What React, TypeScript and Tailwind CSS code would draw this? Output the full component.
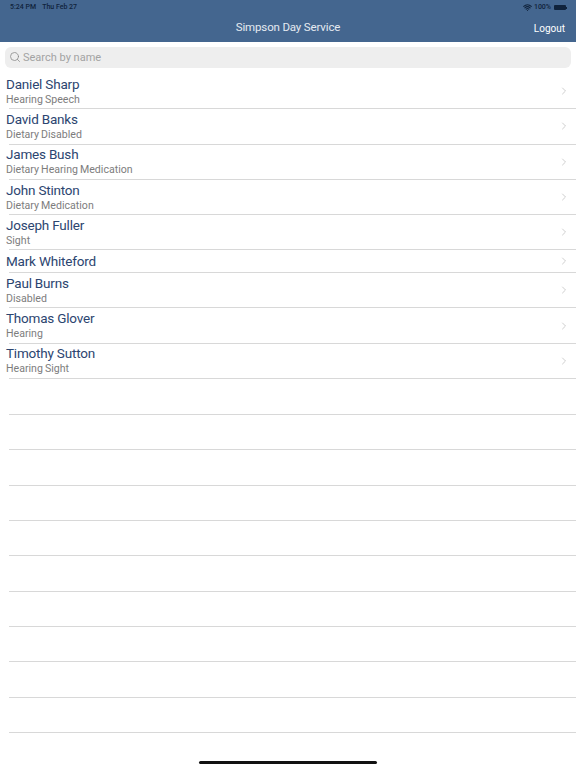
import React from 'react';
import { ChevronRight, Search, Wifi } from 'lucide-react';

interface Client {
  name: string;
  tags: string[];
}

const clients: Client[] = [
  { name: 'Daniel Sharp', tags: ['Hearing', 'Speech'] },
  { name: 'David Banks', tags: ['Dietary', 'Disabled'] },
  { name: 'James Bush', tags: ['Dietary', 'Hearing', 'Medication'] },
  { name: 'John Stinton', tags: ['Dietary', 'Medication'] },
  { name: 'Joseph Fuller', tags: ['Sight'] },
  { name: 'Mark Whiteford', tags: [] },
  { name: 'Paul Burns', tags: ['Disabled'] },
  { name: 'Thomas Glover', tags: ['Hearing'] },
  { name: 'Timothy Sutton', tags: ['Hearing', 'Sight'] },
];

const emptyRows = Array.from({ length: 10 }, (_, i) => i);

const ClientRow = ({ client }: { client: Client }) => {
  const hasTags = client.tags.length > 0;
  return (
    <div className={`relative flex items-center pl-[6px] pr-[6px] pb-[1px] ${hasTags ? 'h-[35.3px]' : 'h-[22.6px]'}`}>
      <div className="flex-1 min-w-0">
        <div className={`text-[13.5px] leading-[17px] tracking-[-0.2px] text-[#2c4570] ${hasTags ? '-mt-[1px]' : ''}`}>{client.name}</div>
        {hasTags && (
          <div className="flex gap-[2px] text-[10.6px] leading-[12px] mt-[1px] text-[#7d7d7d]">
            {client.tags.map((tag) => (
              <span key={tag}>{tag}</span>
            ))}
          </div>
        )}
      </div>
      <ChevronRight size={12} strokeWidth={1.5} className="text-[#bdbdbd]" />
      <div className="absolute bottom-0 left-[9px] right-0 h-px bg-[#d8d8d8]" />
    </div>
  );
};

export default function App() {
  return (
    <div className="w-[576px] h-[768px] bg-white relative overflow-hidden font-['Roboto','Liberation_Sans',sans-serif]">
      <header className="h-[42px] bg-[#44668f] flex flex-col">
        <div className="h-[14px] flex items-center justify-between pl-[10px] pr-[9px] pt-[1px] text-[7px] text-[#10233c] font-medium">
          <div className="flex gap-[6px]">
            <span>5:24 PM</span>
            <span>Thu Feb 27</span>
          </div>
          <div className="flex items-center gap-[2px]">
            <Wifi size={9} strokeWidth={3} className="text-[#10233c]" />
            <span>100%</span>
            <div className="w-[12px] h-[5px] rounded-[1px] bg-[#10233c] ml-[1px]" />
            <div className="w-px h-[2px] bg-[#10233c] -ml-[2px]" />
          </div>
        </div>
        <div className="flex-1 flex items-center justify-center relative">
          <span className="text-[11.5px] tracking-[-0.15px] text-[#e4eaf1]">Simpson Day Service</span>
          <span className="absolute right-[11px] text-[10px] text-white">Logout</span>
        </div>
      </header>

      <div className="px-[5px] pt-[5px] pb-[6px]">
        <div className="h-[21px] rounded-[6px] bg-[#eeeeee] flex items-center pl-[4px] gap-[2px]">
          <Search size={12} strokeWidth={1.6} className="text-[#8a8a8a] -mt-[1px]" />
          <span className="text-[11px] text-[#a3a3a3] pt-[1px]">Search by name</span>
        </div>
      </div>

      <div>
        {clients.map((client) => (
          <ClientRow key={client.name} client={client} />
        ))}
        <div className="pt-[0.5px]">
          {emptyRows.map((row) => (
            <div key={row} className="h-[35.35px] border-b border-[#d8d8d8] ml-[9px]" />
          ))}
        </div>
      </div>

      <div className="absolute bottom-[4px] left-[199px] w-[178px] h-[3px] rounded-full bg-[#111111]" />
    </div>
  );
}
